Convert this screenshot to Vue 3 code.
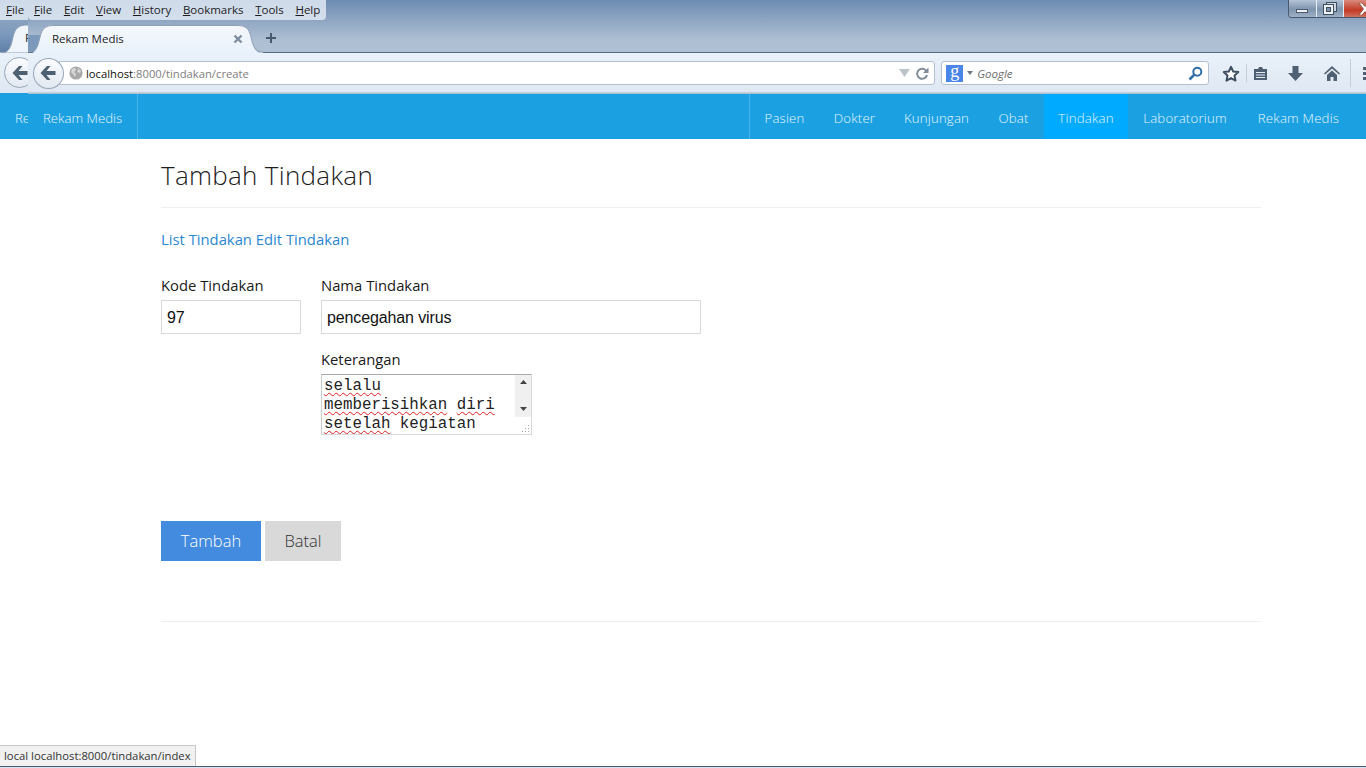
<template>
  <div class="page">
    <header class="browser">
      <div class="menu-row">
        <nav class="menu">
          <span v-for="m in menus" :key="m.label"><u>{{ m.key }}</u>{{ m.rest }}</span>
        </nav>
        <div class="win-btns">
          <div class="win-btn"><i class="win-min"></i></div>
          <div class="win-btn">
            <svg width="14" height="13" viewBox="0 0 14 13"><rect x="3.500" y="0.500" width="10" height="9" fill="#cfd8e3" stroke="#3f4f62"/><rect x="0.500" y="2.500" width="10" height="10" fill="#eef2f6" stroke="#3f4f62"/><rect x="3.500" y="5.500" width="4" height="4" fill="#7f93ab" stroke="#3f4f62"/></svg>
          </div>
          <div class="win-btn win-close">
            <svg width="14" height="12" viewBox="0 0 14 12"><path d="M1 0h3l3 3.500L10 0h3L8.500 6 13 12h-3L7 8.500 4 12H1l4.500-6z" fill="#fff" stroke="#5c2a22" stroke-width="0.600"/></svg>
          </div>
        </div>
      </div>
      <div class="tab-row">
        <div class="tab">
          <svg class="tab-shape" width="235" height="29" viewBox="0 0 235 29">
            <defs>
              <linearGradient id="tabfill" x1="0" y1="0" x2="0" y2="1"><stop offset="0" stop-color="#f5f8fc"/><stop offset="1" stop-color="#e8f1fb"/></linearGradient>
            </defs>
            <rect x="0" y="10" width="14" height="17" fill="#7c99bc"/>
            <path d="M0 29C8 29 10 22 12 12 14 3 18 0 26 0H209C217 0 221 3 223 12 225 22 227 29 235 27V29z" fill="url(#tabfill)"/>
            <path d="M1 27C8 27 10 21 12 12 14 3 18 .5 26 .5H209C217 .5 221 3 223 12 225 21 227 27 235 27" fill="none" stroke="#8d9fb6"/>
          </svg>
          <span class="tab-title">Rekam Medis</span>
          <svg class="tab-x" width="10" height="10" viewBox="0 0 10 10"><path d="M1.500 1.500l7 7M8.500 1.500l-7 7" stroke="#7d8ca0" stroke-width="2.400"/></svg>
        </div>
        <svg class="tab-plus" width="12" height="12" viewBox="0 0 12 12"><path d="M6 1v10M1 6h10" stroke="#46586e" stroke-width="2"/></svg>
      </div>
      <div class="tool-row">
        <div class="back-btn">
          <svg width="16" height="16" viewBox="0 0 16 16"><path d="M7 1L.5 8 7 15h3.500L6.500 10H15.500V6H6.500L10.500 1z" fill="#4f6073"/></svg>
        </div>
        <div class="url-bar">
          <svg class="globe" width="14" height="14" viewBox="0 0 14 14"><circle cx="7" cy="7" r="6.600" fill="#a9a9a9"/><path d="M3 3l3-1 1 2-2 2 2 2-1 3-2-3-2-2zM9 2l3 3-1 2-3-1 1-2z" fill="#d9d9d9"/></svg>
          <span class="url"><b>localhost</b>:8000/tindakan/create</span>
          <svg class="url-drop" width="11" height="8" viewBox="0 0 11 8"><path d="M0 0h11L5.500 8z" fill="#bcc3cb"/></svg>
          <svg class="url-reload" width="13" height="13" viewBox="0 0 13 13"><path d="M10.500 4.200A5 5 0 1 0 11 8" fill="none" stroke="#7f8c99" stroke-width="2"/><path d="M12.500 0.500v5.500H7z" fill="#7f8c99"/></svg>
        </div>
        <div class="search-bar">
          <span class="g-logo">g</span>
          <svg width="6" height="4" viewBox="0 0 6 4"><path d="M0 0h6L3 4z" fill="#6b7785"/></svg>
          <span class="search-text">Google</span>
          <svg class="search-icon" width="15" height="15" viewBox="0 0 15 15"><circle cx="9.300" cy="5.700" r="4" fill="none" stroke="#2f6ea8" stroke-width="2"/><path d="M6.300 8.700L1.500 13.500" stroke="#2f6ea8" stroke-width="2.600"/></svg>
        </div>
        <div class="tools">
          <svg width="18" height="17" viewBox="0 0 18 17"><path d="M9 1.800l2.200 4.700 5.100.6-3.800 3.500 1 5-4.500-2.500-4.500 2.500 1-5L1.700 7.100l5.100-.6z" fill="#fff" stroke="#3f4f62" stroke-width="2" stroke-linejoin="round"/></svg>
          <i class="tool-sep"></i>
          <svg width="15" height="15" viewBox="0 0 15 15"><path d="M1 3h4l1-2h3l1 2h4v11H1z" fill="#4f5f72"/><path d="M3 6h9v1H3zM3 8.500h9v1H3zM3 11h9v1H3z" fill="#e6edf5"/></svg>
          <svg class="t-down" width="15" height="15" viewBox="0 0 15 15"><path d="M4.500 0h6v7H15l-7.500 8L0 7h4.500z" fill="#4f6073"/></svg>
          <svg class="t-home" width="16" height="15" viewBox="0 0 16 15"><path d="M8 0L0 7.500l1 1L8 2.500l7 6 1-1zM3 9l5-4.500L13 9v6H9.500v-4h-3v4H3z" fill="#4f6073"/></svg>
          <i class="tool-sep tool-sep-2"></i>
          <i class="tool-more"></i>
        </div>
      </div>
    </header>

    <nav class="topbar">
      <a class="brand">Rekam Medis</a>
      <ul class="links">
        <li
          v-for="l in links"
          :key="l.name"
          :class="{ active: l.name === 'Tindakan' }"
          :style="{ width: l.width + 'px' }"
        >{{ l.name }}</li>
      </ul>
    </nav>

    <main class="content">
      <h1>Tambah Tindakan</h1>
      <p class="actions"><a>List Tindakan</a> <a>Edit Tindakan</a></p>
      <form class="form" @submit.prevent>
        <div class="field">
          <label>Kode Tindakan</label>
          <input class="in-kode" value="97" />
        </div>
        <div class="col">
          <div class="field">
            <label>Nama Tindakan</label>
            <input class="in-nama" value="pencegahan virus" />
          </div>
          <div class="field field-ket">
            <label>Keterangan</label>
            <div class="area">
              <div class="area-text">
                <span class="sq">selalu</span><br />
                <span class="sq">memberisihkan</span> <span class="sq">diri</span><br />
                <span class="sq">setelah</span> kegiatan
              </div>
              <div class="scroll">
                <svg width="7" height="4" viewBox="0 0 7 4"><path d="M3.500 0L7 4H0z" fill="#444"/></svg>
                <svg width="7" height="4" viewBox="0 0 7 4"><path d="M0 0h7L3.500 4z" fill="#444"/></svg>
              </div>
              <svg class="grip" width="9" height="9" viewBox="0 0 9 9"><path d="M7 1h1v1H7zM4 4h1v1H4zM7 4h1v1H7zM1 7h1v1H1zM4 7h1v1H4zM7 7h1v1H7z" fill="#a8a8a8"/></svg>
            </div>
          </div>
        </div>
      </form>
      <div class="buttons">
        <button class="btn btn-primary">Tambah</button>
        <button class="btn btn-cancel">Batal</button>
      </div>
      <hr />
    </main>

    <!-- leftover paint strip at the left edge of the capture -->
    <div class="ghost" aria-hidden="true">
      <span class="ghost-menu"><u>F</u>ile</span>
      <div class="ghost-tab">
        <svg class="tab-shape" width="235" height="28" viewBox="0 0 235 28">
          <path d="M0 28C8 28 10 22 12 12 14 3 18 0 26 0H209V28z" fill="#f0f5fb" stroke="#8d9fb6"/>
        </svg>
        <span class="tab-title">R</span>
      </div>
      <div class="ghost-back">
        <svg width="16" height="16" viewBox="0 0 16 16"><path d="M7 1L.5 8 7 15h3.500L6.500 10H15.500V6H6.500L10.500 1z" fill="#4f6073"/></svg>
      </div>
      <span class="ghost-brand">Re</span>
    </div>

    <div class="status">local localhost:8000/tindakan/index</div>
    <div class="taskbar-edge"></div>
  </div>
</template>

<script setup>
const menus = [
  { label: 'File', key: 'F', rest: 'ile' },
  { label: 'Edit', key: 'E', rest: 'dit' },
  { label: 'View', key: 'V', rest: 'iew' },
  { label: 'History', key: 'H', rest: 'istory' },
  { label: 'Bookmarks', key: 'B', rest: 'ookmarks' },
  { label: 'Tools', key: 'T', rest: 'ools' },
  { label: 'Help', key: 'H', rest: 'elp' },
]
const links = [
  { name: 'Pasien', width: 69 },
  { name: 'Dokter', width: 71 },
  { name: 'Kunjungan', width: 93 },
  { name: 'Obat', width: 61 },
  { name: 'Tindakan', width: 84 },
  { name: 'Laboratorium', width: 114 },
  { name: 'Rekam Medis', width: 113 },
]
</script>

<style>
html, body { margin: 0; background: #fff; overflow: hidden; }
</style>

<style scoped>
.page {
  position: relative;
  width: 1366px;
  height: 768px;
  overflow: hidden;
  background: #fff;
  font-family: "Open Sans", "Noto Sans", sans-serif;
  color: #222;
}
.browser {
  height: 94px;
  background: linear-gradient(#6d8cb2 0, #8ba3c0 18px, #aebfd3 40px, #b0c0d3 53px);
  display: flex;
  flex-direction: column;
}
.menu-row { height: 20px; display: flex; justify-content: space-between; }
.menu {
  margin-left: 28px;
  padding-left: 6px;
  width: 298px;
  box-sizing: border-box;
  height: 20px;
  display: flex;
  gap: 11.700px;
  align-items: center;
  background: rgba(225, 233, 243, 0.85);
  border-radius: 0 0 4px 4px;
  font: 11.500px/20px "Open Sans", sans-serif;
  color: #1c1c1c;
}
.win-btns {
  width: 78px;
  height: 18px;
  display: flex;
  border: 1px solid #4a5a6e;
  border-top: 0;
  border-right: 0;
  border-radius: 0 0 0 4px;
  box-sizing: border-box;
  overflow: hidden;
}
.win-btn {
  width: 28px;
  height: 17px;
  display: flex;
  align-items: center;
  justify-content: center;
  background: linear-gradient(#b4c3d5, #7f94ae 55%, #9fb0c5);
  border-right: 1px solid #e8eef5;
  box-sizing: border-box;
}
.win-close {
  background: linear-gradient(#d98a7c, #c23a26 60%, #d0705f);
  border-right: 0;
  width: 22px;
  overflow: hidden;
  justify-content: flex-start;
  padding-left: 14px;
}
.win-close svg { flex: none; }
.win-min { width: 12px; height: 4px; background: #eef2f6; border: 1px solid #4c5b6d; box-sizing: border-box; margin-top: 5px; }

.tab-row { height: 33px; display: flex; align-items: flex-start; padding-left: 28px; }
.tab {
  position: relative;
  z-index: 3;
  margin-top: 5px;
  width: 235px;
  height: 29px;
  box-sizing: border-box;
  padding: 0 20px 2px 24px;
  display: flex;
  align-items: center;
  justify-content: space-between;
  color: #1e1e1e;
}
.tab-shape { position: absolute; left: 0; top: 0; }
.tab-title { position: relative; font: 11.500px "Open Sans", sans-serif; }
.tab-x { position: relative; }
.tab-plus { margin-left: 2px; margin-top: 12px; }

.tool-row {
  height: 41px;
  box-sizing: border-box;
  border-top: 1px solid #536c86;
  background: linear-gradient(#e9f1fa, #dfe8f2);
  display: flex;
  align-items: center;
  padding-left: 33px;
  margin-top: -1px;
  box-shadow: inset 0 -1px 0 #c5d0dc;
}
.back-btn {
  position: relative;
  z-index: 2;
  width: 31px;
  height: 31px;
  border-radius: 50%;
  background: linear-gradient(#fafcff, #e3e9f1);
  border: 1px solid #97a6b8;
  box-sizing: border-box;
  display: flex;
  align-items: center;
  justify-content: center;
}
.url-bar {
  margin-left: -5px;
  width: 877px;
  height: 24px;
  box-sizing: border-box;
  background: #fff;
  border: 1px solid #b3c0d0;
  border-radius: 0 3px 3px 0;
  display: flex;
  align-items: center;
  padding-left: 9px;
  padding-right: 5px;
}
.globe { flex: none; }
.url { margin-left: 3px; font: 11.250px "Open Sans", sans-serif; color: #7e7e7e; flex: 1; white-space: nowrap; }
.url b { font-weight: 400; color: #111; }
.url-reload { margin-left: 6px; }
.search-bar {
  margin-left: 6px;
  width: 268px;
  height: 24px;
  box-sizing: border-box;
  background: #fff;
  border: 1px solid #b3c0d0;
  border-radius: 3px;
  display: flex;
  align-items: center;
  padding: 0 5px 0 4px;
  gap: 4px;
}
.g-logo {
  width: 17px;
  height: 17px;
  background: #4a86e8;
  color: #fff;
  font: 400 18px/13px "Liberation Serif", serif;
  text-align: center;
}
.search-text { font: italic 11.500px "Open Sans", sans-serif; color: #6d6d6d; flex: 1; }
.tools { display: flex; align-items: center; margin-left: 13px; position: relative; flex: 1; }
.tool-sep { width: 1px; height: 18px; background: #c3ced9; margin: 0 6px 0 6px; }
.t-down { margin-left: 20px; }
.t-home { margin-left: 21px; }
.tool-sep-2 { height: 28px; margin: 0 0 0 10px; }
.tool-more { width: 3px; height: 13px; margin-left: 12px; background: repeating-linear-gradient(#4f6073 0 3px, transparent 3px 5px); }

.topbar {
  height: 45px;
  background: #1ba1e2;
  display: flex;
  justify-content: space-between;
  font-size: 13.200px;
  font-weight: 300;
  color: #e6f5fc;
  letter-spacing: 0.2px;
}
.brand {
  margin-left: 28px;
  width: 110px;
  box-sizing: border-box;
  padding-left: 15px;
  line-height: 48px;
  letter-spacing: 0;
  white-space: nowrap;
  border-right: 1px solid #49b4e8;
}
.links {
  display: flex;
  margin: 0;
  padding: 0 11px 0 0;
  list-style: none;
  border-left: 1px solid #49b4e8;
}
.links li { text-align: center; line-height: 48px; white-space: nowrap; }
.links li.active { background: #00aaff; }

.content { margin-left: 161px; width: 1100px; }
h1 {
  margin: 0;
  height: 69px;
  box-sizing: border-box;
  padding-top: 17px;
  border-bottom: 1px solid #eee;
  font-size: 26px;
  line-height: 38px;
  font-weight: 300;
  color: #1c1c1c;
  letter-spacing: 0.3px;
}
.actions {
  margin: 21px 0 0;
  font-size: 14.800px;
  line-height: 20px;
  color: #2a88d0;
}
.form { margin-top: 27px; display: flex; gap: 20px; }
.field { display: flex; flex-direction: column; }
label { font-size: 14.800px; line-height: 18px; color: #1a1a1a; height: 24px; }
input {
  box-sizing: border-box;
  height: 34px;
  padding: 2px 5px 0;
  border: 1px solid #d9d9d9;
  font: 16px "Liberation Sans", Arial, sans-serif;
  letter-spacing: -0.120px;
  color: #111;
  outline: none;
  background: #fff;
}
.in-kode { width: 140px; }
.in-nama { width: 380px; }
.field-ket { margin-top: 16px; }
.area {
  position: relative;
  width: 211px;
  height: 61px;
  box-sizing: border-box;
  border: 1px solid #d9d9d9;
  border-top-color: #aaa;
  border-left-color: #ccc;
  display: flex;
  overflow: hidden;
}
.area-text {
  flex: 1;
  min-width: 0;
  padding: 2px 2px 0 2px;
  font: 15.800px/19px "Liberation Mono", "Courier New", monospace;
  color: #222;
  white-space: nowrap;
}
.sq { text-decoration: underline wavy #e02020 1px; text-underline-offset: 2px; }
.scroll {
  flex: none;
  width: 16px;
  height: 42px;
  background: #f0f0f0;
  display: flex;
  flex-direction: column;
  align-items: center;
  justify-content: space-between;
  padding: 5px 0 6px;
  box-sizing: border-box;
}
.grip { position: absolute; right: 1px; bottom: 1px; }
.buttons { margin-top: 86px; display: flex; gap: 4px; }
.btn {
  height: 40px;
  border: 0;
  padding: 0 0 2px;
  font-family: inherit;
  font-size: 16.500px;
  font-weight: 300;
}
.btn-primary { width: 100px; background: #428bdf; color: #fff; }
.btn-cancel { width: 76px; background: #d9d9d9; color: #333; }
hr { margin: 60px 0 0; border: 0; border-top: 1px solid #eee; }

.ghost {
  position: absolute;
  left: 0;
  top: 0;
  width: 28px;
  height: 139px;
  overflow: hidden;
  background: linear-gradient(#6d8cb2 0, #8ba3c0 18px, #7c99bc 34px, #5f80a9 52px, #e9f1fa 53px, #dfe8f2 93px, #1ba1e2 93px);
}
.ghost-menu {
  position: absolute;
  left: 0; top: 0;
  width: 34px;
  height: 20px;
  padding-left: 6px;
  box-sizing: border-box;
  background: rgba(225, 233, 243, 0.85);
  font: 11.500px/20px "Open Sans", sans-serif;
  color: #1c1c1c;
}
.ghost-tab {
  position: absolute;
  left: 1px; top: 25px;
  width: 60px;
  height: 28px;
  padding-left: 24px;
  box-sizing: border-box;
  font: 12px/26px "Open Sans", sans-serif;
}
.ghost-back {
  position: absolute;
  left: 4px; top: 57px;
  width: 31px; height: 31px;
  border-radius: 50%;
  background: linear-gradient(#fafcff, #e3e9f1);
  border: 1px solid #97a6b8;
  box-sizing: border-box;
  display: flex;
  align-items: center;
  justify-content: center;
}
.ghost-brand {
  position: absolute;
  left: 15px; top: 94px;
  font-size: 13.200px;
  font-weight: 300;
  line-height: 48px;
  color: #e6f5fc;
}
.status {
  position: absolute;
  left: 0;
  bottom: 2px;
  height: 21px;
  box-sizing: border-box;
  padding: 0 4px 0 4px;
  background: #f1f1f1;
  border: 1px solid #c8c8c8;
  border-left: 0;
  border-bottom: 0;
  font: 11.300px/20px "Open Sans", sans-serif;
  color: #333;
}
.taskbar-edge {
  position: absolute;
  left: 0; right: 0; bottom: 0;
  height: 1px;
  background: #d5e5f5;
  border-top: 1px solid #4a5a6e;
}
</style>
